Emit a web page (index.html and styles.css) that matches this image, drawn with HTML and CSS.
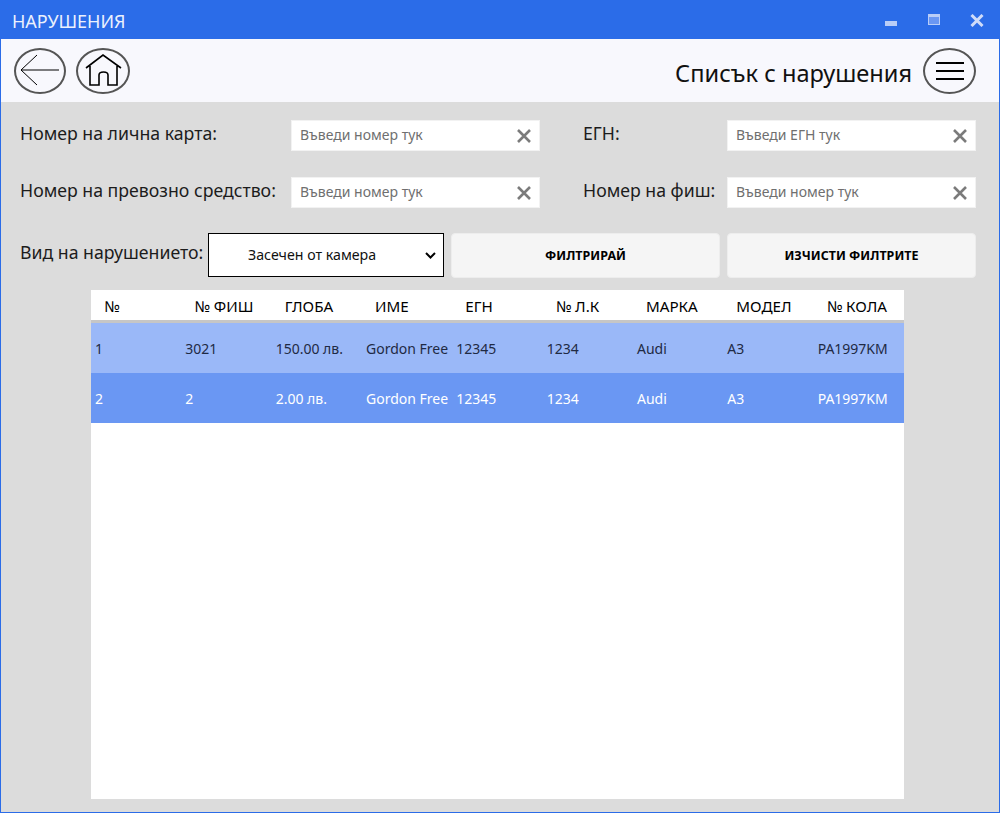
FILE: index.html
```html
<!DOCTYPE html>
<html lang="bg">

<head>
    <meta charset="UTF-8">
    <meta name="viewport" content="width=device-width, initial-scale=1.0">
    <link rel="stylesheet" href="styles.css">
    <title>Нарушения</title>
</head>

<body>
    <div class="window">
        <div class="titlebar">
            <span class="titlebar-text">НАРУШЕНИЯ</span>
            <div class="window-controls">
                <svg class="ctl-min" width="12" height="5" viewBox="0 0 12 5"><rect width="12" height="5" y="0" fill="#b9cdf7"/></svg>
                <svg class="ctl-max" width="12" height="11" viewBox="0 0 12 11"><rect x="0.5" y="0.5" width="11" height="10" fill="#6a97f3" stroke="#b9cdf7"/><rect width="12" height="3" fill="#b9cdf7"/></svg>
                <svg class="ctl-close" width="14" height="13" viewBox="0 0 14 13"><path d="M1.5 1 L12.5 12 M12.5 1 L1.5 12" stroke="#cfdcf9" stroke-width="3"/></svg>
            </div>
        </div>

        <header class="topbar">
            <button class="round-btn back-btn" type="button" aria-label="Назад">
                <svg width="42" height="42" viewBox="0 0 42 42"><path d="M40 20 H2 M2 20 L18 5 M2 20 L18 35" fill="none" stroke="#000" stroke-width="1"/></svg>
            </button>
            <button class="round-btn home-btn" type="button" aria-label="Начало">
                <svg width="38" height="34" viewBox="0 0 38 34"><path d="M2 14 L19 1 L37 14 M6 12 V31 H15 V21 Q15 18 19.5 18 Q24 18 24 21 V31 H33 V12" fill="none" stroke="#000" stroke-width="1.6"/></svg>
            </button>
            <h1 class="page-title">Списък с нарушения</h1>
            <button class="round-btn menu-btn" type="button" aria-label="Меню">
                <span></span><span></span><span></span>
            </button>
        </header>

        <main class="content">
            <form class="filters">
                <label class="filter-label" for="idCard">Номер на лична карта:</label>
                <div class="field">
                    <input type="text" id="idCard" placeholder="Въведи номер тук">
                    <svg class="clear" width="14" height="14" viewBox="0 0 14 14"><path d="M1 1 L13 13 M13 1 L1 13" stroke="#7b7b7b" stroke-width="2.6"/></svg>
                </div>
                <label class="filter-label" for="egn">ЕГН:</label>
                <div class="field">
                    <input type="text" id="egn" placeholder="Въведи ЕГН тук">
                    <svg class="clear" width="14" height="14" viewBox="0 0 14 14"><path d="M1 1 L13 13 M13 1 L1 13" stroke="#7b7b7b" stroke-width="2.6"/></svg>
                </div>
                <label class="filter-label" for="vehicle">Номер на превозно средство:</label>
                <div class="field">
                    <input type="text" id="vehicle" placeholder="Въведи номер тук">
                    <svg class="clear" width="14" height="14" viewBox="0 0 14 14"><path d="M1 1 L13 13 M13 1 L1 13" stroke="#7b7b7b" stroke-width="2.6"/></svg>
                </div>
                <label class="filter-label" for="ticket">Номер на фиш:</label>
                <div class="field">
                    <input type="text" id="ticket" placeholder="Въведи номер тук">
                    <svg class="clear" width="14" height="14" viewBox="0 0 14 14"><path d="M1 1 L13 13 M13 1 L1 13" stroke="#7b7b7b" stroke-width="2.6"/></svg>
                </div>
            </form>

            <div class="filter-actions">
                <label class="filter-label" for="kind">Вид на нарушението:</label>
                <div class="select-box">
                    <select id="kind">
                        <option>Засечен от камера</option>
                    </select>
                    <svg class="chevron" width="11" height="7" viewBox="0 0 11 7"><path d="M1 1 L5.5 5.5 L10 1" fill="none" stroke="#000" stroke-width="2"/></svg>
                </div>
                <button class="action-btn btn-filter" type="button">ФИЛТРИРАЙ</button>
                <button class="action-btn btn-clear" type="button">ИЗЧИСТИ ФИЛТРИТЕ</button>
            </div>

            <div class="table-wrap">
                <table class="violations">
                    <thead>
                        <tr>
                            <th>№</th>
                            <th>№ ФИШ</th>
                            <th>ГЛОБА</th>
                            <th>ИМЕ</th>
                            <th>ЕГН</th>
                            <th>№ Л.К</th>
                            <th>МАРКА</th>
                            <th>МОДЕЛ</th>
                            <th>№ КОЛА</th>
                        </tr>
                    </thead>
                    <tbody>
                        <tr class="row-light">
                            <td>1</td>
                            <td>3021</td>
                            <td>150.00 лв.</td>
                            <td>Gordon Free</td>
                            <td>12345</td>
                            <td>1234</td>
                            <td>Audi</td>
                            <td>A3</td>
                            <td>PA1997KM</td>
                        </tr>
                        <tr class="row-dark">
                            <td>2</td>
                            <td>2</td>
                            <td>2.00 лв.</td>
                            <td>Gordon Free</td>
                            <td>12345</td>
                            <td>1234</td>
                            <td>Audi</td>
                            <td>A3</td>
                            <td>PA1997KM</td>
                        </tr>
                    </tbody>
                </table>
            </div>
        </main>
    </div>
</body>

</html>
```

FILE: styles.css
```css
* {
    box-sizing: border-box;
}

html,
body {
    margin: 0;
    height: 100%;
    overflow: hidden;
}

body {
    font-family: "Noto Sans", "Open Sans", sans-serif;
    background-color: #dcdcdc;
}

.window {
    height: 813px;
    display: flex;
    flex-direction: column;
    border-left: 1px solid #2b6ce8;
    border-right: 1px solid #2b6ce8;
    border-bottom: 1px solid #2b6ce8;
}

.titlebar {
    height: 39px;
    margin: 0 -1px;
    padding: 2px 16px 0 12px;
    flex-shrink: 0;
    display: flex;
    align-items: center;
    justify-content: space-between;
    background-color: #2b6ce8;
    color: #fff;
}

.titlebar-text {
    font-size: 18px;
    color: #eaf0fd;
}

.window-controls {
    display: flex;
    align-items: center;
}

.ctl-min {
    margin-top: 6px;
    margin-right: 31px;
}

.ctl-max {
    margin-right: 30px;
    margin-top: -3px;
}

.ctl-close {
    margin-top: 0;
}

.topbar {
    height: 63px;
    flex-shrink: 0;
    padding: 1px 23px 0 13px;
    display: flex;
    align-items: center;
    background-color: #f8f8fd;
}

.round-btn {
    padding: 0;
    border: 2px solid #555;
    border-radius: 50%;
    height: 46px;
    background: transparent;
    display: flex;
    align-items: center;
    justify-content: center;
}

.back-btn {
    width: 52px;
    margin-right: 10px;
    overflow: hidden;
}

.home-btn {
    width: 54px;
}

.page-title {
    margin: 3px 11px 0 auto;
    font-size: 23.6px;
    font-weight: 400;
    color: #111;
}

.menu-btn {
    width: 53px;
    flex-direction: column;
    gap: 6px;
    padding-bottom: 1px;
}

.menu-btn span {
    display: block;
    width: 28px;
    height: 2px;
    background-color: #000;
}

.content {
    flex: 1;
    padding: 18px 23px 13px 19px;
    display: flex;
    flex-direction: column;
    min-height: 0;
}

.filters {
    display: grid;
    grid-template-columns: 271px 249px 187px 249px;
    grid-template-rows: 31px 31px;
    row-gap: 26px;
    align-items: center;
}

.filter-label {
    font-size: 17.7px;
    line-height: 24px;
    color: #1c1c1c;
    white-space: nowrap;
    margin-top: -5px;
}

.filters .filter-label:nth-of-type(even) {
    padding-left: 43px;
}

.field {
    position: relative;
    height: 100%;
}

.field input {
    width: 100%;
    height: 100%;
    padding: 0 36px 2px 8px;
    border: 1px solid #f2f2f2;
    background-color: #fff;
    font-family: inherit;
    font-size: 14px;
    outline: none;
}

.field input::placeholder {
    color: #6f6f6f;
    opacity: 1;
}

.clear {
    position: absolute;
    top: 50%;
    right: 9px;
    margin-top: -7px;
}

.filter-actions {
    margin-top: 25px;
    display: flex;
    align-items: flex-start;
}

.filter-actions .filter-label {
    width: 188px;
    margin-top: 7px;
}

.select-box {
    position: relative;
    width: 236px;
    height: 44px;
    margin-right: 7px;
}

.select-box select {
    width: 100%;
    height: 100%;
    padding: 0 0 2px 39px;
    border: 1px solid #000;
    border-radius: 0;
    background-color: #fff;
    appearance: none;
    font-family: inherit;
    font-size: 14.2px;
    color: #111;
}

.chevron {
    position: absolute;
    top: 19px;
    right: 8px;
}

.action-btn {
    height: 45px;
    border: 1px solid #ededed;
    border-radius: 4px;
    background-color: #f5f5f5;
    font-family: inherit;
    font-size: 12.5px;
    font-weight: 700;
    color: #000;
    cursor: pointer;
}

.btn-filter {
    width: 269px;
    margin-right: 7px;
}

.btn-clear {
    width: 249px;
}

.table-wrap {
    flex: 1;
    margin: 12px 72px 0 71px;
    background-color: #fff;
}

.violations {
    width: 100%;
    table-layout: fixed;
    border-collapse: separate;
    border-spacing: 0;
}

.violations th {
    height: 33px;
    padding: 1px 0 0 13px;
    border-bottom: 3px solid #c6c6c6;
    text-align: left;
    font-size: 15.2px;
    font-weight: 400;
    color: #000;
    white-space: nowrap;
}

.violations td {
    height: 50px;
    padding: 0 0 0 4px;
    font-size: 14px;
    white-space: nowrap;
}

.row-light {
    background-color: #9ab8f8;
    color: #1f2a44;
}

.row-dark {
    background-color: #6a97f3;
    color: #fff;
}
```
